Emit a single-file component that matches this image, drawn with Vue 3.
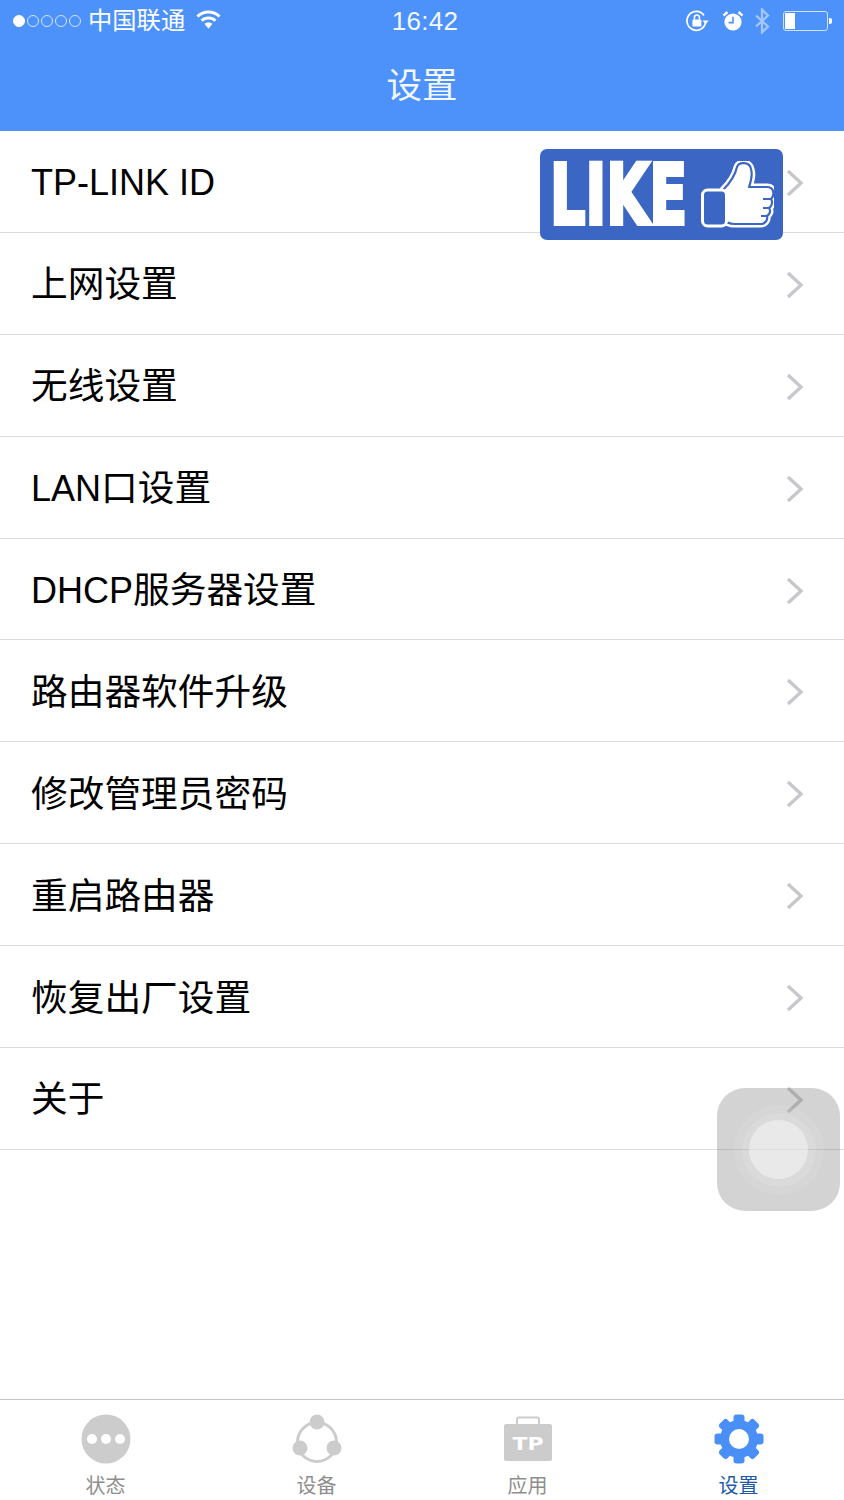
<template>
  <div class="page">
    <header class="head">
      <div class="status">
        <div class="status-left">
          <div class="dots">
            <i v-for="n in 5" :key="n" class="dot" :class="{ on: n === 1 }"></i>
          </div>
          <span class="carrier">中国联通</span>
          <svg class="wifi" width="25" height="21" viewBox="0 0 26 21">
            <path d="M1.5 7.4a16.500 16.500 0 0 1 23 0" fill="none" stroke="#fff" stroke-width="3" />
            <path d="M5.8 11.800a10.400 10.400 0 0 1 14.400 0" fill="none" stroke="#fff" stroke-width="3" />
            <path d="M8.800 15a6.200 6.200 0 0 1 8.400 0L13 20z" fill="#fff" />
          </svg>
        </div>
        <div class="time">16:42</div>
        <div class="status-right">
          <svg width="24" height="24" viewBox="0 0 24 24">
            <path d="M20.6 13.5A9.4 9.4 0 1 1 19 6.4" fill="none" stroke="#fff" stroke-width="1.7" />
            <path d="M17.5 11.6h6.2l-3.1 3.6z" fill="#fff" />
            <rect x="7.4" y="10.6" width="9" height="7" rx="1" fill="#fff" />
            <path d="M9.4 10.8V8.6a2.5 2.5 0 0 1 5 0v2.2" fill="none" stroke="#fff" stroke-width="1.5" />
          </svg>
          <svg class="alarm" width="22" height="22" viewBox="0 0 22 22">
            <circle cx="11" cy="12" r="8.6" fill="#fff" />
            <path d="M11 6.8V12.6H6.6" fill="none" stroke="#4d92fb" stroke-width="1.6" />
            <path d="M1.5 5.6 5.4 2M20.5 5.6 16.6 2" stroke="#fff" stroke-width="2.4" />
          </svg>
          <svg class="bt" width="16" height="26" viewBox="0 0 16 26">
            <path d="M2 7.5 14 18.5 8 24.5V1.5l6 6L2 18.5" fill="none" stroke="#a3c6fb" stroke-width="2.3" />
          </svg>
          <div class="battery">
            <div class="battery-body"><div class="battery-level"></div></div>
            <div class="battery-tip"></div>
          </div>
        </div>
      </div>
      <div class="title">设置</div>
    </header>

    <main class="list">
      <div v-for="item in items" :key="item.en + item.zh" class="row">
        <span class="row-text"><span class="en">{{ item.en }}</span>{{ item.zh }}</span>
        <svg class="chevron" width="18" height="28" viewBox="0 0 18 28">
          <path d="M2 2l13 12L2 26" fill="none" stroke="#c8c8cc" stroke-width="3.4" />
        </svg>
      </div>

      <div class="like">
        <span class="like-text">LIKE</span>
        <svg class="thumb" width="74" height="68" viewBox="0 0 74 68">
          <path d="M23 29C30 22 35 15 37 6c2-6 13-5 14 2 2 6 0 12-2 18h18c7 0 8 8 4 12 2 3 1 7-2 9 2 3 1 6-2 8 1 4-2 8-6 8H34c-4 0-7-2-11-3z" fill="none" stroke="#fff" stroke-width="7" stroke-linejoin="round" />
          <path d="M23 29C30 22 35 15 37 6c2-6 13-5 14 2 2 6 0 12-2 18h18c7 0 8 8 4 12 2 3 1 7-2 9 2 3 1 6-2 8 1 4-2 8-6 8H34c-4 0-7-2-11-3z" fill="#fff" stroke="#3b66c4" stroke-width="2.200" stroke-linejoin="round" />
          <rect x="2.500" y="29" width="24" height="36" rx="5" fill="#3b66c4" stroke="#fff" stroke-width="3" />
          <path d="M63 38h8M63 47h6M61 55h6" stroke="#3b66c4" stroke-width="1.800" fill="none" />
        </svg>
      </div>

      <div class="assist">
        <div class="assist-ring outer">
          <div class="assist-ring middle">
            <div class="assist-core"></div>
          </div>
        </div>
      </div>
    </main>

    <nav class="tabs">
      <div v-for="tab in tabs" :key="tab.label" class="tab" :class="{ active: tab.active }">
        <svg v-if="tab.icon === 'status'" width="50" height="50" viewBox="0 0 50 50">
          <circle cx="25" cy="25" r="24.500" fill="#cccccc" />
          <circle cx="11" cy="25" r="5" fill="#fff" />
          <circle cx="25" cy="25" r="5" fill="#fff" />
          <circle cx="39" cy="25" r="5" fill="#fff" />
        </svg>
        <svg v-else-if="tab.icon === 'device'" width="50" height="50" viewBox="0 0 50 50">
          <circle cx="25" cy="28" r="19.500" fill="none" stroke="#cccccc" stroke-width="3" />
          <circle cx="25" cy="8" r="7.500" fill="#cccccc" />
          <circle cx="8" cy="34" r="7.500" fill="#cccccc" />
          <circle cx="42" cy="34" r="7.500" fill="#cccccc" />
        </svg>
        <svg v-else-if="tab.icon === 'app'" width="50" height="50" viewBox="0 0 50 50">
          <path d="M14 11V5.500a2 2 0 0 1 2-2h18a2 2 0 0 1 2 2V11" fill="none" stroke="#cccccc" stroke-width="2" />
          <rect x="1" y="10" width="48" height="37" rx="2" fill="#cccccc" />
          <text x="25" y="36" class="tp-mark" textLength="31" lengthAdjust="spacingAndGlyphs">TP</text>
        </svg>
        <svg v-else width="50" height="50" viewBox="0 0 50 50">
          <g fill="#4a8ff5">
            <circle cx="25" cy="25" r="19" />
            <rect v-for="deg in [0, 45, 90, 135]" :key="deg" x="19.500" y="0.500" width="11" height="49" rx="3" :transform="`rotate(${deg} 25 25)`" />
          </g>
          <circle cx="25" cy="25" r="10" fill="#fff" />
        </svg>
        <span class="tab-label">{{ tab.label }}</span>
      </div>
    </nav>
  </div>
</template>

<script setup>
const items = [
  { en: 'TP-LINK ID', zh: '' },
  { en: '', zh: '上网设置' },
  { en: '', zh: '无线设置' },
  { en: 'LAN', zh: '口设置' },
  { en: 'DHCP', zh: '服务器设置' },
  { en: '', zh: '路由器软件升级' },
  { en: '', zh: '修改管理员密码' },
  { en: '', zh: '重启路由器' },
  { en: '', zh: '恢复出厂设置' },
  { en: '', zh: '关于' }
]

const tabs = [
  { label: '状态', icon: 'status' },
  { label: '设备', icon: 'device' },
  { label: '应用', icon: 'app' },
  { label: '设置', icon: 'settings', active: true }
]
</script>

<style>
html,
body {
  margin: 0;
  background: #fff;
}
</style>

<style scoped>
.page {
  width: 844px;
  height: 1500px;
  display: flex;
  flex-direction: column;
  font-family: "Liberation Sans", "Noto Sans CJK SC", sans-serif;
  color: #000;
  background: #fff;
  overflow: hidden;
}
.head {
  height: 131px;
  flex: none;
  background: #4d92fb;
  color: #fff;
}
.status {
  height: 42px;
  display: grid;
  grid-template-columns: 1fr auto 1fr;
  align-items: center;
  padding: 0 12px 0 13px;
}
.status-left {
  display: flex;
  align-items: center;
}
.dots {
  display: flex;
  gap: 2px;
}
.dot {
  width: 10px;
  height: 10px;
  border: 1px solid #d5e5fe;
  border-radius: 50%;
}
.dot.on {
  background: #fff;
  border-color: #fff;
}
.carrier {
  margin-left: 7px;
  font-size: 24.300px;
  line-height: 42px;
}
.wifi {
  margin: -3px 0 0 11px;
}
.time {
  font-size: 26px;
  letter-spacing: .3px;
  padding-left: 5px;
  color: #f4f8ff;
}
.status-right {
  display: flex;
  align-items: center;
  justify-content: flex-end;
}
.alarm {
  margin-left: 13px;
}
.bt {
  margin-left: 10px;
}
.battery {
  display: flex;
  align-items: center;
  margin-left: 13px;
}
.battery-body {
  width: 45px;
  height: 20px;
  border: 1px solid #cfe1fe;
  border-radius: 3px;
  padding: 1px;
  box-sizing: border-box;
}
.battery-level {
  width: 10px;
  height: 100%;
  background: #fff;
}
.battery-tip {
  width: 3px;
  height: 6px;
  margin-left: 1px;
  background: #fff;
  border-radius: 0 2px 2px 0;
}
.title {
  text-align: center;
  font-size: 35.500px;
  line-height: 46px;
  margin-top: 21px;
  color: #f2f7ff;
}
.list {
  flex: 1;
  position: relative;
}
.row {
  height: 101.900px;
  box-sizing: border-box;
  display: flex;
  align-items: center;
  justify-content: space-between;
  padding: 0 40px 0 31px;
  border-bottom: 1px solid #dcdcde;
}
.row-text {
  font-size: 36.700px;
  line-height: 44px;
  margin-top: 4px;
}
.en {
  font-size: 36px;
}
.chevron {
  display: block;
  margin-top: 3px;
}
.like {
  position: absolute;
  left: 540px;
  top: 18px;
  width: 243px;
  height: 91px;
  background: #3b66c4;
  border-radius: 7px;
}
.like-text {
  position: absolute;
  left: 10px;
  top: 1px;
  font-family: "DejaVu Sans", sans-serif;
  font-size: 83px;
  line-height: 91px;
  font-weight: 700;
  color: #fff;
  transform: scaleX(.67);
  transform-origin: left center;
  -webkit-text-stroke: 4px #fff;
}
.thumb {
  position: absolute;
  left: 160px;
  top: 12px;
}
.assist {
  position: absolute;
  left: 717px;
  top: 957px;
  width: 123px;
  height: 123px;
  border-radius: 28px;
  background: rgba(120, 120, 120, .33);
  display: flex;
  align-items: center;
  justify-content: center;
}
.assist-ring {
  border-radius: 50%;
  display: flex;
  align-items: center;
  justify-content: center;
}
.outer {
  width: 90px;
  height: 90px;
  background: rgba(255, 255, 255, .08);
}
.middle {
  width: 74px;
  height: 74px;
  background: rgba(255, 255, 255, .1);
}
.assist-core {
  width: 59px;
  height: 59px;
  border-radius: 50%;
  background: rgba(255, 255, 255, .42);
}
.tabs {
  height: 101px;
  flex: none;
  box-sizing: border-box;
  border-top: 1px solid #c4c4c6;
  display: grid;
  grid-template-columns: repeat(4, 1fr);
  padding: 14px 0 0;
}
.tab {
  display: flex;
  flex-direction: column;
  align-items: center;
  color: #8e8e8e;
}
.tab-label {
  font-size: 20px;
  line-height: 28px;
  margin-top: 8px;
}
.tab.active {
  color: #1e5aa8;
}
.tp-mark {
  font-family: "DejaVu Sans", sans-serif;
  font-size: 17px;
  font-weight: 700;
  fill: #fff;
  text-anchor: middle;
}
</style>
